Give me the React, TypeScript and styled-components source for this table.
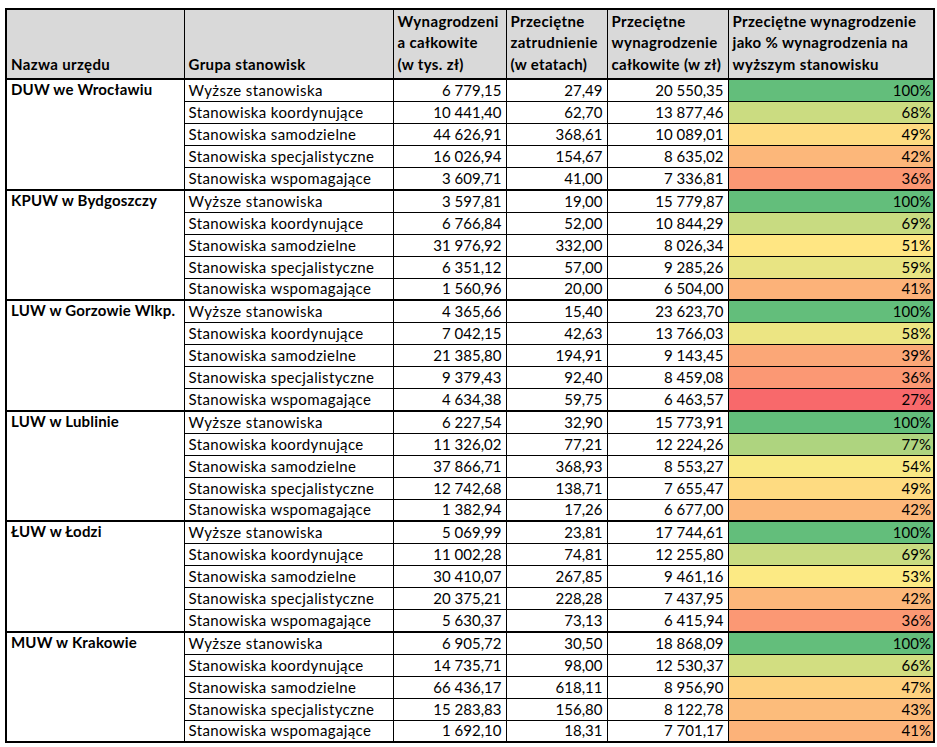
import { createGlobalStyle } from "styled-components";
import styled from "styled-components";

const GlobalStyle = createGlobalStyle`
  html, body {
    margin: 0;
    padding: 0;
    background: #ffffff;
  }
  body {
    font-family: Lato, "Open Sans", "Liberation Sans", sans-serif;
    color: #000;
  }
`;

const Page = styled.div`
  padding: 8px 0 0 5px;
`;

const Table = styled.table`
  border-collapse: collapse;
  table-layout: fixed;
  width: 928px;
  border: 2px solid #000;
  font-size: 15px;
  line-height: 19px;
`;

const HeadCell = styled.th`
  background: #d9d9d9;
  border: 1px solid #000;
  height: 65px;
  padding: 0 4px 3px;
  text-align: left;
  vertical-align: bottom;
  font-weight: 700;
  line-height: 21.5px;
  letter-spacing: 0.35px;
  white-space: nowrap;
  overflow: hidden;
`;

const Row = styled.tr<{ $first: boolean }>`
  height: ${({ $first }) => ($first ? "22.5px" : "22px")};
  & > td {
    border-top: ${({ $first }) => ($first ? "2px solid #000" : "1px solid #000")};
  }
`;

const OfficeCell = styled.td`
  border: 1px solid #000;
  vertical-align: top;
  padding: 0 4px;
  font-weight: 700;
  letter-spacing: 0.2px;
  white-space: nowrap;
`;

const GroupCell = styled.td`
  border: 1px solid #000;
  padding: 0 4px;
  letter-spacing: 0.38px;
  white-space: nowrap;
  overflow: hidden;
`;

const NumCell = styled.td`
  border: 1px solid #000;
  padding: 0 4px;
  text-align: right;
  white-space: nowrap;
`;

const PctCell = styled.td<{ $bg: string }>`
  border: 1px solid #000;
  padding: 0 2px;
  text-align: right;
  background: ${({ $bg }) => $bg};
  white-space: nowrap;
`;

const groups = [
  "Wyższe stanowiska",
  "Stanowiska koordynujące",
  "Stanowiska samodzielne",
  "Stanowiska specjalistyczne",
  "Stanowiska wspomagające",
];

const offices: { name: string; rows: [string, string, string, number][] }[] = [
  {
    name: "DUW we Wrocławiu",
    rows: [
      ["6 779,15", "27,49", "20 550,35", 100],
      ["10 441,40", "62,70", "13 877,46", 68],
      ["44 626,91", "368,61", "10 089,01", 49],
      ["16 026,94", "154,67", "8 635,02", 42],
      ["3 609,71", "41,00", "7 336,81", 36],
    ],
  },
  {
    name: "KPUW w Bydgoszczy",
    rows: [
      ["3 597,81", "19,00", "15 779,87", 100],
      ["6 766,84", "52,00", "10 844,29", 69],
      ["31 976,92", "332,00", "8 026,34", 51],
      ["6 351,12", "57,00", "9 285,26", 59],
      ["1 560,96", "20,00", "6 504,00", 41],
    ],
  },
  {
    name: "LUW w Gorzowie Wlkp.",
    rows: [
      ["4 365,66", "15,40", "23 623,70", 100],
      ["7 042,15", "42,63", "13 766,03", 58],
      ["21 385,80", "194,91", "9 143,45", 39],
      ["9 379,43", "92,40", "8 459,08", 36],
      ["4 634,38", "59,75", "6 463,57", 27],
    ],
  },
  {
    name: "LUW w Lublinie",
    rows: [
      ["6 227,54", "32,90", "15 773,91", 100],
      ["11 326,02", "77,21", "12 224,26", 77],
      ["37 866,71", "368,93", "8 553,27", 54],
      ["12 742,68", "138,71", "7 655,47", 49],
      ["1 382,94", "17,26", "6 677,00", 42],
    ],
  },
  {
    name: "ŁUW w Łodzi",
    rows: [
      ["5 069,99", "23,81", "17 744,61", 100],
      ["11 002,28", "74,81", "12 255,80", 69],
      ["30 410,07", "267,85", "9 461,16", 53],
      ["20 375,21", "228,28", "7 437,95", 42],
      ["5 630,37", "73,13", "6 415,94", 36],
    ],
  },
  {
    name: "MUW w Krakowie",
    rows: [
      ["6 905,72", "30,50", "18 868,09", 100],
      ["14 735,71", "98,00", "12 530,37", 66],
      ["66 436,17", "618,11", "8 956,90", 47],
      ["15 283,83", "156,80", "8 122,78", 43],
      ["1 692,10", "18,31", "7 701,17", 41],
    ],
  },
];

// Excel 3-colour scale: red (min) -> yellow (median) -> green (max)
const RED = [248, 105, 107];
const YELLOW = [255, 235, 132];
const GREEN = [99, 190, 123];
const MIN = 27;
const MID = 52;
const MAX = 100;

const mix = (a: number[], b: number[], t: number) =>
  `rgb(${a.map((v, i) => Math.round(v + (b[i] - v) * t)).join(",")})`;

const scale = (v: number) =>
  v <= MID ? mix(RED, YELLOW, (v - MIN) / (MID - MIN)) : mix(YELLOW, GREEN, (v - MID) / (MAX - MID));

export default function App() {
  return (
    <Page>
      <GlobalStyle />
      <Table>
        <colgroup>
          <col style={{ width: 178 }} />
          <col style={{ width: 209 }} />
          <col style={{ width: 113 }} />
          <col style={{ width: 101 }} />
          <col style={{ width: 121 }} />
          <col style={{ width: 206 }} />
        </colgroup>
        <thead>
          <tr>
            <HeadCell>Nazwa urzędu</HeadCell>
            <HeadCell>Grupa stanowisk</HeadCell>
            <HeadCell>
              Wynagrodzeni
              <br />a całkowite
              <br />
              (w tys. zł)
            </HeadCell>
            <HeadCell>
              Przeciętne
              <br />
              zatrudnienie
              <br />
              (w etatach)
            </HeadCell>
            <HeadCell>
              Przeciętne
              <br />
              wynagrodzenie
              <br />
              całkowite (w zł)
            </HeadCell>
            <HeadCell>
              Przeciętne wynagrodzenie
              <br />
              jako % wynagrodzenia na
              <br />
              wyższym stanowisku
            </HeadCell>
          </tr>
        </thead>
        <tbody>
          {offices.map((office) =>
            office.rows.map((r, i) => (
              <Row key={office.name + i} $first={i === 0}>
                {i === 0 && <OfficeCell rowSpan={5}>{office.name}</OfficeCell>}
                <GroupCell>{groups[i]}</GroupCell>
                <NumCell>{r[0]}</NumCell>
                <NumCell>{r[1]}</NumCell>
                <NumCell>{r[2]}</NumCell>
                <PctCell $bg={scale(r[3])}>{r[3]}%</PctCell>
              </Row>
            ))
          )}
        </tbody>
      </Table>
    </Page>
  );
}
